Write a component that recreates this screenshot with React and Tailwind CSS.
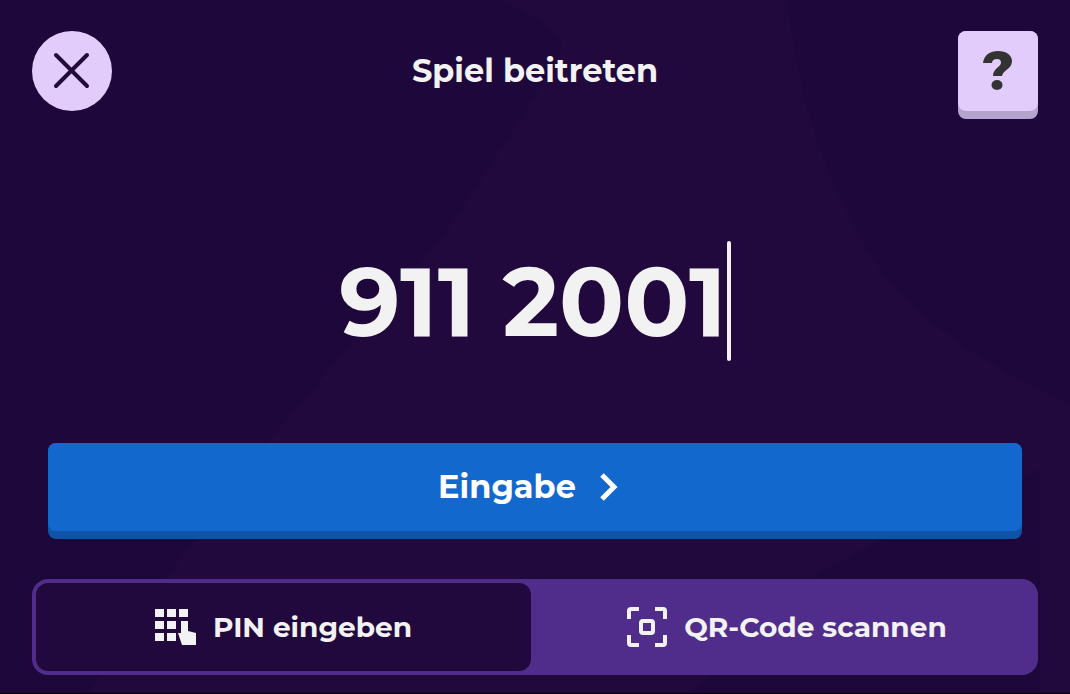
import { useState } from 'react';

const Backdrop = () => (
  <svg className="absolute inset-0 w-full h-full" viewBox="0 0 1070 694" preserveAspectRatio="none" aria-hidden="true">
    <path d="M500 0Q562 30 562 48Q540 92 448 230L270 440L165 580L88 694H690L810 580L885 538L1040 470V694H1070V404C1010 380 920 325 880 270C845 215 800 130 788 0Z" fill="#21093d" />
  </svg>
);

const KeypadIcon = () => (
  <svg width="42" height="42" viewBox="0 0 42 42" fill="currentColor" aria-hidden="true">
    <path d="M0 3h9v8H0zM12 3h9v8h-9zM24 3h9v8h-9zM0 15h9v8H0zM12 15h9v8h-9zM0 27h9v8H0zM12 27h9v8h-9z" />
    <path d="M26 15h7v10l8 2v12H27l-4-12h3z" />
  </svg>
);

const ScanIcon = () => (
  <svg width="42" height="42" viewBox="0 0 42 42" fill="none" stroke="currentColor" strokeWidth="4" strokeLinejoin="round" aria-hidden="true">
    <path d="M3 13V5q0-2 2-2h8M29 3h8q2 0 2 2v8M39 29v8q0 2-2 2h-8M13 39H5q-2 0-2-2v-8" />
    <rect x="15" y="15" width="12" height="12" rx="2" />
  </svg>
);

const tabs = [
  { id: 'pin', label: 'PIN eingeben', Icon: KeypadIcon },
  { id: 'qr', label: 'QR-Code scannen', Icon: ScanIcon },
];

const App = () => {
  const [pin, setPin] = useState('911 2001');
  const [active, setActive] = useState('pin');

  return (
    <div className="relative min-h-screen bg-[#1e083b] text-[#f2f2f2] font-['Montserrat','Inter',sans-serif] border-b border-black">
      <Backdrop />
      <div className="relative min-h-[calc(100vh-1px)] flex flex-col px-8 pt-[31px] pb-[18px]">
        <header className="flex items-start justify-between">
          <button aria-label="Schließen" className="w-20 h-20 rounded-full bg-[#e1ccfc] text-[#220a3d] flex items-center justify-center">
            <svg width="40" height="40" viewBox="0 0 40 40" fill="none" stroke="currentColor" strokeWidth="4" strokeLinecap="round" aria-hidden="true">
              <path d="M4 4L35 35M35 4L4 35" />
            </svg>
          </button>
          <h1 className="h-20 flex items-center text-[32px] font-bold">Spiel beitreten</h1>
          <button aria-label="Hilfe" className="w-20 h-[88px] rounded-lg bg-[#b5a3cd]">
            <span className="h-20 mb-2 rounded-lg bg-[#e1ccfc] text-[#333333] flex items-center justify-center">
              <svg width="32" height="40" viewBox="0 0 32 40" fill="currentColor" aria-hidden="true">
                <path d="M1 12C2 4 8 0 16 0C24 0 30 4 30 10C30 18 21 19 20 25H11C11 17 19 16 19 11.500C19 9 17.500 8 15 8C12 8 10 9.500 10 12Z" />
                <ellipse cx="15" cy="34" rx="5.500" ry="5" />
              </svg>
            </span>
          </button>
        </header>

        <main className="flex-1 flex flex-col px-4">
          <div className="flex-1 flex items-center justify-center pt-10">
            <input
              aria-label="Spiel-PIN"
              value={pin}
              onChange={(e) => setPin(e.target.value)}
              className="[field-sizing:content] max-w-full h-[120px] pt-[2px] bg-transparent text-[96px] font-bold outline-none caret-transparent"
            />
            <span className="w-1 h-[120px] rounded-sm bg-[#f2f2f2]" />
          </div>
          <button className="w-full rounded-lg bg-[#0f53a6] pb-2 text-white">
            <span className="h-[88px] rounded-lg bg-[#1368ce] flex items-center justify-center gap-5 text-[32px] font-bold">
              Eingabe
              <svg width="36" height="28" viewBox="0 0 36 28" fill="none" stroke="currentColor" strokeWidth="5" aria-hidden="true">
                <path d="M6 2L18 14L6 26" />
              </svg>
            </span>
          </button>
        </main>

        <div role="tablist" className="mt-10 h-24 grid grid-cols-2 gap-2 rounded-2xl border-4 border-[#512d8b] bg-[#512d8b]">
          {tabs.map(({ id, label, Icon }) => (
            <button
              key={id}
              role="tab"
              aria-selected={active === id}
              onClick={() => setActive(id)}
              className={`flex items-center justify-center gap-4 rounded-xl text-[28px] font-bold ${active === id ? 'bg-[#21093d]' : ''}`}
            >
              <Icon />
              {label}
            </button>
          ))}
        </div>
      </div>
    </div>
  );
};

export default App;
